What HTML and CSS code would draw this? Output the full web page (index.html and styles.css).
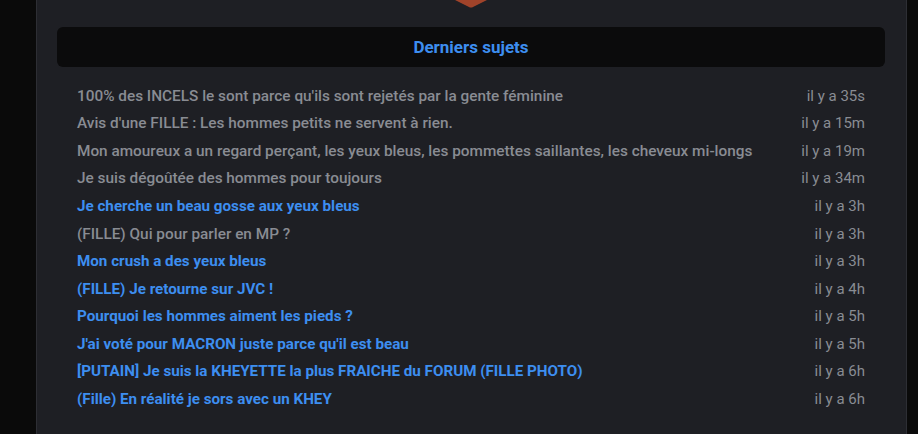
FILE: index.html
```html
<!DOCTYPE html>
<html lang="fr">
<head>
    <meta charset="UTF-8">
    <meta name="viewport" content="width=device-width, initial-scale=1.0">
    <title>Derniers sujets</title>
    <link rel="stylesheet" href="styles.css">
</head>
<body>

    <div class="page">
        <div class="panel">
            <div class="logo">
                <svg width="32" height="8" viewBox="0 0 32 8">
                    <path d="M0 0 H32 L18 7 Q16 8 14 7 Z" fill="#a0432a"/>
                </svg>
            </div>

            <div class="box-header">Derniers sujets</div>

            <ul class="topics">
                <li class="topic"><a href="#">100% des INCELS le sont parce qu'ils sont rejetés par la gente féminine</a><span class="time">il y a 35s</span></li>
                <li class="topic"><a href="#">Avis d'une FILLE : Les hommes petits ne servent à rien.</a><span class="time">il y a 15m</span></li>
                <li class="topic"><a href="#">Mon amoureux a un regard perçant, les yeux bleus, les pommettes saillantes, les cheveux mi-longs</a><span class="time">il y a 19m</span></li>
                <li class="topic"><a href="#">Je suis dégoûtée des hommes pour toujours</a><span class="time">il y a 34m</span></li>
                <li class="topic new"><a href="#">Je cherche un beau gosse aux yeux bleus</a><span class="time">il y a 3h</span></li>
                <li class="topic"><a href="#">(FILLE) Qui pour parler en MP ?</a><span class="time">il y a 3h</span></li>
                <li class="topic new"><a href="#">Mon crush a des yeux bleus</a><span class="time">il y a 3h</span></li>
                <li class="topic new"><a href="#">(FILLE) Je retourne sur JVC !</a><span class="time">il y a 4h</span></li>
                <li class="topic new"><a href="#">Pourquoi les hommes aiment les pieds ?</a><span class="time">il y a 5h</span></li>
                <li class="topic new"><a href="#">J'ai voté pour MACRON juste parce qu'il est beau</a><span class="time">il y a 5h</span></li>
                <li class="topic new"><a href="#">[PUTAIN] Je suis la KHEYETTE la plus FRAICHE du FORUM (FILLE PHOTO)</a><span class="time">il y a 6h</span></li>
                <li class="topic new"><a href="#">(Fille) En réalité je sors avec un KHEY</a><span class="time">il y a 6h</span></li>
            </ul>
        </div>
    </div>

</body>
</html>
```

FILE: styles.css
```css
html, body {
    margin: 0;
    padding: 0;
    height: 100%;
    background-color: #0a0a0a;
    font-family: Roboto, "Liberation Sans", Arial, sans-serif;
    overflow: hidden;
}
.page {
    padding-left: 36px;
    padding-right: 11px;
    height: 100%;
}
.panel {
    background-color: #1e1f24;
    border-left: 1px solid #2d2e34;
    border-right: 1px solid #2d2e34;
    height: 100%;
    padding: 0 21px 0 20px;
}
.logo {
    display: flex;
    justify-content: center;
    height: 8px;
    margin-bottom: 19px;
}
.logo svg {
    display: block;
}
.box-header {
    background-color: #0b0b0c;
    border-radius: 6px;
    height: 40px;
    line-height: 40px;
    text-align: center;
    color: #3d8ef0;
    font-weight: bold;
    font-size: 17px;
}
.topics {
    list-style: none;
    margin: 15px 0 0 0;
    padding: 0 20px;
}
.topic {
    display: flex;
    justify-content: space-between;
    align-items: center;
    height: 27.55px;
    font-size: 15px;
}
.topic a {
    color: #898c93;
    font-size: 15.35px;
    font-weight: 500;
    text-decoration: none;
}
.topic.new a {
    color: #3d8ef0;
    font-size: 15.2px;
    font-weight: bold;
}
.time {
    color: #898c93;
}
```
